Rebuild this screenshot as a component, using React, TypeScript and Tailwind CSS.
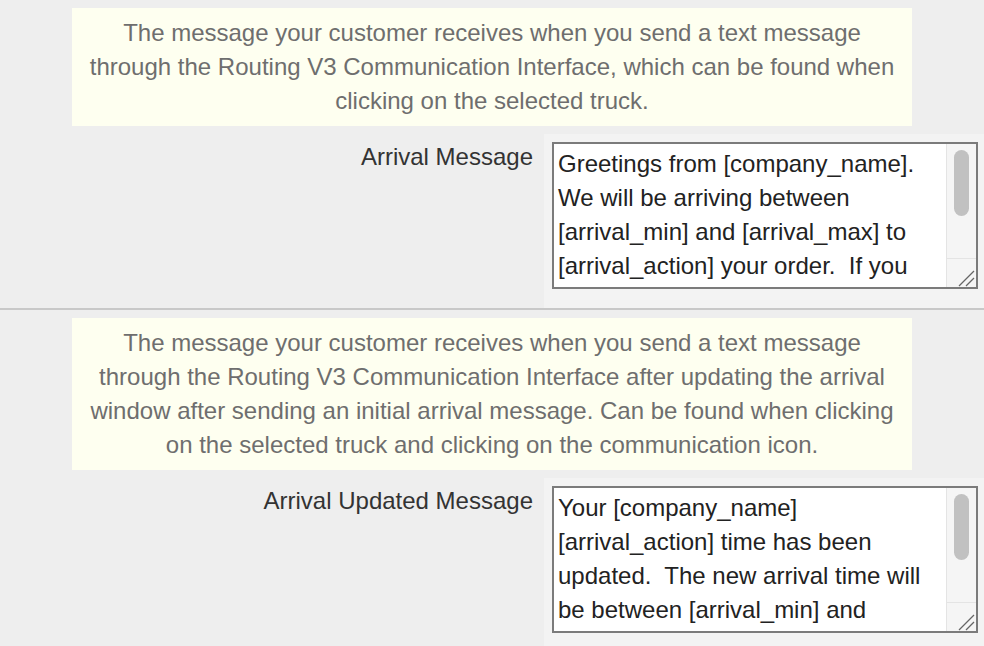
const font = "font-['Liberation_Sans',Arial,Helvetica,sans-serif]";

type Setting = {
  help: string;
  label: string;
  value: string;
};

// only the part of each message that shows in the box
const settings: Setting[] = [
  {
    help: "The message your customer receives when you send a text message through the Routing V3 Communication Interface, which can be found when clicking on the selected truck.",
    label: "Arrival Message",
    value:
      "Greetings from [company_name]. We will be arriving between [arrival_min] and [arrival_max] to [arrival_action] your order.  If you",
  },
  {
    help: "The message your customer receives when you send a text message through the Routing V3 Communication Interface after updating the arrival window after sending an initial arrival message. Can be found when clicking on the selected truck and clicking on the communication icon.",
    label: "Arrival Updated Message",
    value:
      "Your [company_name] [arrival_action] time has been updated.  The new arrival time will be between [arrival_min] and",
  },
];

function FakeTextarea({ value }: { value: string }) {
  return (
    <div className="flex h-[147px] w-[426px] border-2 border-[#7b7b7b] bg-white">
      <div className="flex-1 whitespace-pre-wrap pl-1 pt-[3px] text-[24px] leading-[34px] text-[#222]">
        {value}
      </div>
      <div className="flex w-[30px] flex-col border-l border-[#e4e4e4] bg-[#f5f5f5]">
        <div className="flex-1 pl-[7px] pt-[6px]">
          <div className="h-[66px] w-[15px] rounded-full bg-[#c1c1c1]" />
        </div>
        <div className="h-[29px] border-t border-[#e4e4e4]">
          <svg width="29" height="28" viewBox="0 0 29 28">
            <line x1="12" y1="27" x2="27" y2="12" stroke="#666" strokeWidth="1.2" />
            <line x1="19" y1="27" x2="27" y2="19" stroke="#666" strokeWidth="1.2" />
          </svg>
        </div>
      </div>
    </div>
  );
}

export default function App() {
  return (
    <div className={`${font} min-h-[646px] w-full bg-[#eeeeee]`}>
      {settings.map((s, i) => (
        <section key={i} className={i < settings.length - 1 ? "border-b-2 border-[#c8c8c8]" : ""}>
          <div className="px-[72px] pt-2">
            <p className="bg-[#fefff0] px-[14px] py-2 text-center text-[24px] leading-[34px] text-[#6e6e6e]">
              {s.help}
            </p>
          </div>
          <div className="mt-2 grid grid-cols-[544px_1fr]">
            <div className="pr-[11px] pt-[6px] text-right text-[24px] leading-[34px] text-[#333]">
              {s.label}
            </div>
            <div className="bg-[#f3f3f3] pb-[19px] pl-2 pt-2">
              <FakeTextarea value={s.value} />
            </div>
          </div>
        </section>
      ))}
    </div>
  );
}
